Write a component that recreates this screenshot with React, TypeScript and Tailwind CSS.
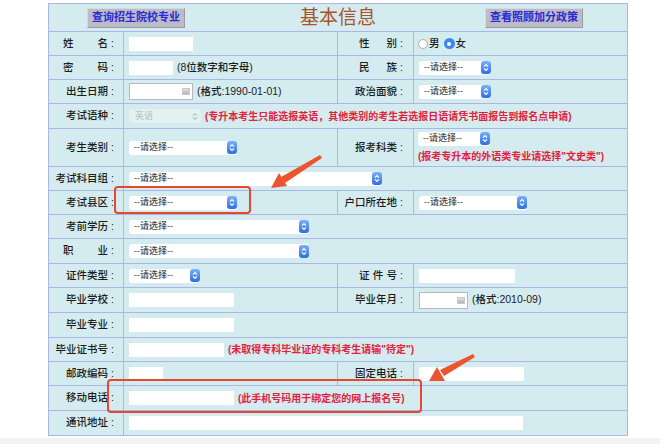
import React from "react";

const cell = "border border-[#aab6e4] align-middle";

function Stepper() {
  return (
    <span className="w-[10px] h-[13px] rounded-[3px] bg-linear-to-b from-[#7ab0fa] to-[#2f6de0] flex items-center justify-center">
      <svg width="6" height="9" viewBox="0 0 6 9">
        <path d="M1 3.6L3 1.6L5 3.6M1 5.4L3 7.4L5 5.4" stroke="white" strokeWidth="1.2" fill="none" />
      </svg>
    </span>
  );
}

function Select({ w }: { w: string }) {
  return (
    <div className={`${w} h-[14px] bg-white rounded-[3px] flex items-center justify-between pl-[5px]`}>
      <span className="text-[9px] text-[#444] leading-none">--请选择--</span>
      <Stepper />
    </div>
  );
}

function Box({ w }: { w: string }) {
  return <div className={`${w} h-[14px] bg-white shrink-0`} />;
}

function CalBox({ w }: { w: string }) {
  return (
    <div className={`${w} h-[17px] bg-white border border-[#b9b9b9] flex items-center justify-end pr-[2px] shrink-0`}>
      <span className="w-[8px] h-[7px] bg-linear-to-b from-[#e2e2e2] to-[#b4b4b4] border border-[#c8c8c8]" />
    </div>
  );
}

function Label({ text, spread, col3 }: { text: string; spread?: boolean; col3?: boolean }) {
  const chars = text.split("");
  return (
    <td className={`${cell} text-right ${col3 ? "pr-[10px]" : "pr-[9px]"}`}>
      {spread ? (
        <span className={`inline-flex justify-between ${col3 ? "w-[44px]" : "w-[51px]"}`}>
          {chars.map((c, i) => (
            <span key={i}>
              {c}
              {i === chars.length - 1 && <span className="ml-[3px]">:</span>}
            </span>
          ))}
        </span>
      ) : (
        <>
          {text}
          <span className="ml-[3px]">:</span>
        </>
      )}
    </td>
  );
}

function Val({ children, span }: { children?: React.ReactNode; span?: number }) {
  return (
    <td colSpan={span} className={`${cell} pl-[5px]`}>
      <div className="flex items-center gap-[4px]">{children}</div>
    </td>
  );
}

function Note({ children }: { children: React.ReactNode }) {
  return <span className="text-[10px] font-bold text-[#e3213d] whitespace-nowrap">{children}</span>;
}

function Btn({ children }: { children: React.ReactNode }) {
  return (
    <div className="h-[20px] px-[4px] flex items-center bg-[#bcbcc6] border-t border-l border-[#d8d8de] border-b border-r border-b-[#9a9aa4] border-r-[#9a9aa4] text-[11px] font-bold text-[#2b2bd6]">
      {children}
    </div>
  );
}

export default function App() {
  return (
    <div className="relative w-[660px] h-[444px] bg-white overflow-hidden font-['Liberation_Sans','Noto_Sans_CJK_SC',sans-serif] text-[10.5px] font-medium text-[#1c1c1c]">
      <div className="pl-[48px] pt-[3px]">
        <table className="w-[579px] table-fixed border-collapse border border-[#8190cc] bg-[#d4ecef]">
          <colgroup>
            <col className="w-[75px]" />
            <col className="w-[214px]" />
            <col className="w-[76px]" />
            <col className="w-[214px]" />
          </colgroup>
          <tbody>
            <tr className="h-[28px]">
              <td colSpan={4} className={cell}>
                <div className="grid grid-cols-[1fr_auto_1fr] items-center">
                  <div className="justify-self-start ml-[38px]">
                    <Btn>查询招生院校专业</Btn>
                  </div>
                  <div className="text-[19px] font-normal leading-none text-[#a9532c]">基本信息</div>
                  <div className="justify-self-end mr-[44px]">
                    <Btn>查看照顾加分政策</Btn>
                  </div>
                </div>
              </td>
            </tr>
            <tr className="h-[24px]">
              <Label text="姓名" spread />
              <Val><Box w="w-[64px]" /></Val>
              <Label text="性别" spread col3 />
              <td className={`${cell} pl-[4px]`}>
                <div className="flex items-center">
                  <span className="w-[10px] h-[10px] rounded-full border border-[#b0b0b0] bg-white" />
                  <span className="ml-[1px]">男</span>
                  <span className="ml-[4px] w-[11px] h-[11px] rounded-full bg-[#3d86f0] flex items-center justify-center">
                    <span className="w-[4px] h-[4px] rounded-full bg-white" />
                  </span>
                  <span className="ml-[1px]">女</span>
                </div>
              </td>
            </tr>
            <tr className="h-[24px]">
              <Label text="密码" spread />
              <Val>
                <Box w="w-[44px]" />
                <span>(8位数字和字母)</span>
              </Val>
              <Label text="民族" spread col3 />
              <Val><Select w="w-[72px]" /></Val>
            </tr>
            <tr className="h-[24px]">
              <Label text="出生日期" />
              <Val>
                <CalBox w="w-[64px]" />
                <span>(格式:1990-01-01)</span>
              </Val>
              <Label text="政治面貌" col3 />
              <Val><Select w="w-[72px]" /></Val>
            </tr>
            <tr className="h-[25px]">
              <Label text="考试语种" />
              <Val span={3}>
                <div className="w-[72px] h-[14px] rounded-[3px] bg-[#e3f1f0] flex items-center justify-between pl-[6px] pr-[3px] shrink-0">
                  <span className="text-[9px] font-normal text-[#b2bcbc] leading-none">英语</span>
                  <svg width="6" height="9" viewBox="0 0 6 9">
                    <path d="M1 3.6L3 1.6L5 3.6M1 5.4L3 7.4L5 5.4" stroke="#9aa2a2" strokeWidth="1" fill="none" />
                  </svg>
                </div>
                <Note>(专升本考生只能选报英语，其他类别的考生若选报日语请凭书面报告到报名点申请)</Note>
              </Val>
            </tr>
            <tr className="h-[38px]">
              <Label text="考生类别" />
              <Val><Select w="w-[108px]" /></Val>
              <Label text="报考科类" col3 />
              <td className={`${cell} pl-[4px]`}>
                <div className="flex flex-col items-start gap-[3px]">
                  <Select w="w-[72px]" />
                  <Note>(报考专升本的外语类专业请选择"文史类")</Note>
                </div>
              </td>
            </tr>
            <tr className="h-[24px]">
              <Label text="考试科目组" />
              <Val span={3}><Select w="w-[253px]" /></Val>
            </tr>
            <tr className="h-[24px]">
              <Label text="考试县区" />
              <Val><Select w="w-[108px]" /></Val>
              <Label text="户口所在地" col3 />
              <Val><Select w="w-[108px]" /></Val>
            </tr>
            <tr className="h-[24px]">
              <Label text="考前学历" />
              <Val span={3}><Select w="w-[180px]" /></Val>
            </tr>
            <tr className="h-[25px]">
              <Label text="职业" spread />
              <Val span={3}><Select w="w-[180px]" /></Val>
            </tr>
            <tr className="h-[24px]">
              <Label text="证件类型" />
              <Val><Select w="w-[71px]" /></Val>
              <Label text="证件号" spread col3 />
              <Val><Box w="w-[96px]" /></Val>
            </tr>
            <tr className="h-[25px]">
              <Label text="毕业学校" />
              <Val><Box w="w-[105px]" /></Val>
              <Label text="毕业年月" col3 />
              <Val>
                <CalBox w="w-[49px]" />
                <span>(格式:2010-09)</span>
              </Val>
            </tr>
            <tr className="h-[25px]">
              <Label text="毕业专业" />
              <Val span={3}><Box w="w-[105px]" /></Val>
            </tr>
            <tr className="h-[24px]">
              <Label text="毕业证书号" />
              <Val span={3}>
                <Box w="w-[95px]" />
                <Note>(未取得专科毕业证的专科考生请输"待定")</Note>
              </Val>
            </tr>
            <tr className="h-[24px]">
              <Label text="邮政编码" />
              <Val><Box w="w-[34px]" /></Val>
              <Label text="固定电话" col3 />
              <Val><Box w="w-[105px]" /></Val>
            </tr>
            <tr className="h-[25px]">
              <Label text="移动电话" />
              <Val span={3}>
                <Box w="w-[105px]" />
                <Note>(此手机号码用于绑定您的网上报名号)</Note>
              </Val>
            </tr>
            <tr className="h-[25px]">
              <Label text="通讯地址" />
              <Val span={3}><Box w="w-[394px]" /></Val>
            </tr>
          </tbody>
        </table>
      </div>
      <div className="mt-[2px] h-[8px] bg-[#f3f3f3]" />

      {/* annotation overlay: red boxes and arrows */}
      <svg className="absolute inset-0 pointer-events-none" width="660" height="444" viewBox="0 0 660 444">
        <rect x="115" y="187" width="135" height="26" rx="3" fill="none" stroke="#e5482f" strokeWidth="2" />
        <rect x="108" y="380" width="313" height="32" rx="3" fill="none" stroke="#e5482f" strokeWidth="2" />
        <polygon points="320,155 322,158 285,183 281,177" fill="#ec5430" />
        <polygon points="271,188 287,186 279,173" fill="#ec5430" />
        <polygon points="473,354 475,357 444,376 440,370" fill="#ec5430" />
        <polygon points="429,381 445,381 437,367" fill="#ec5430" />
      </svg>
    </div>
  );
}
